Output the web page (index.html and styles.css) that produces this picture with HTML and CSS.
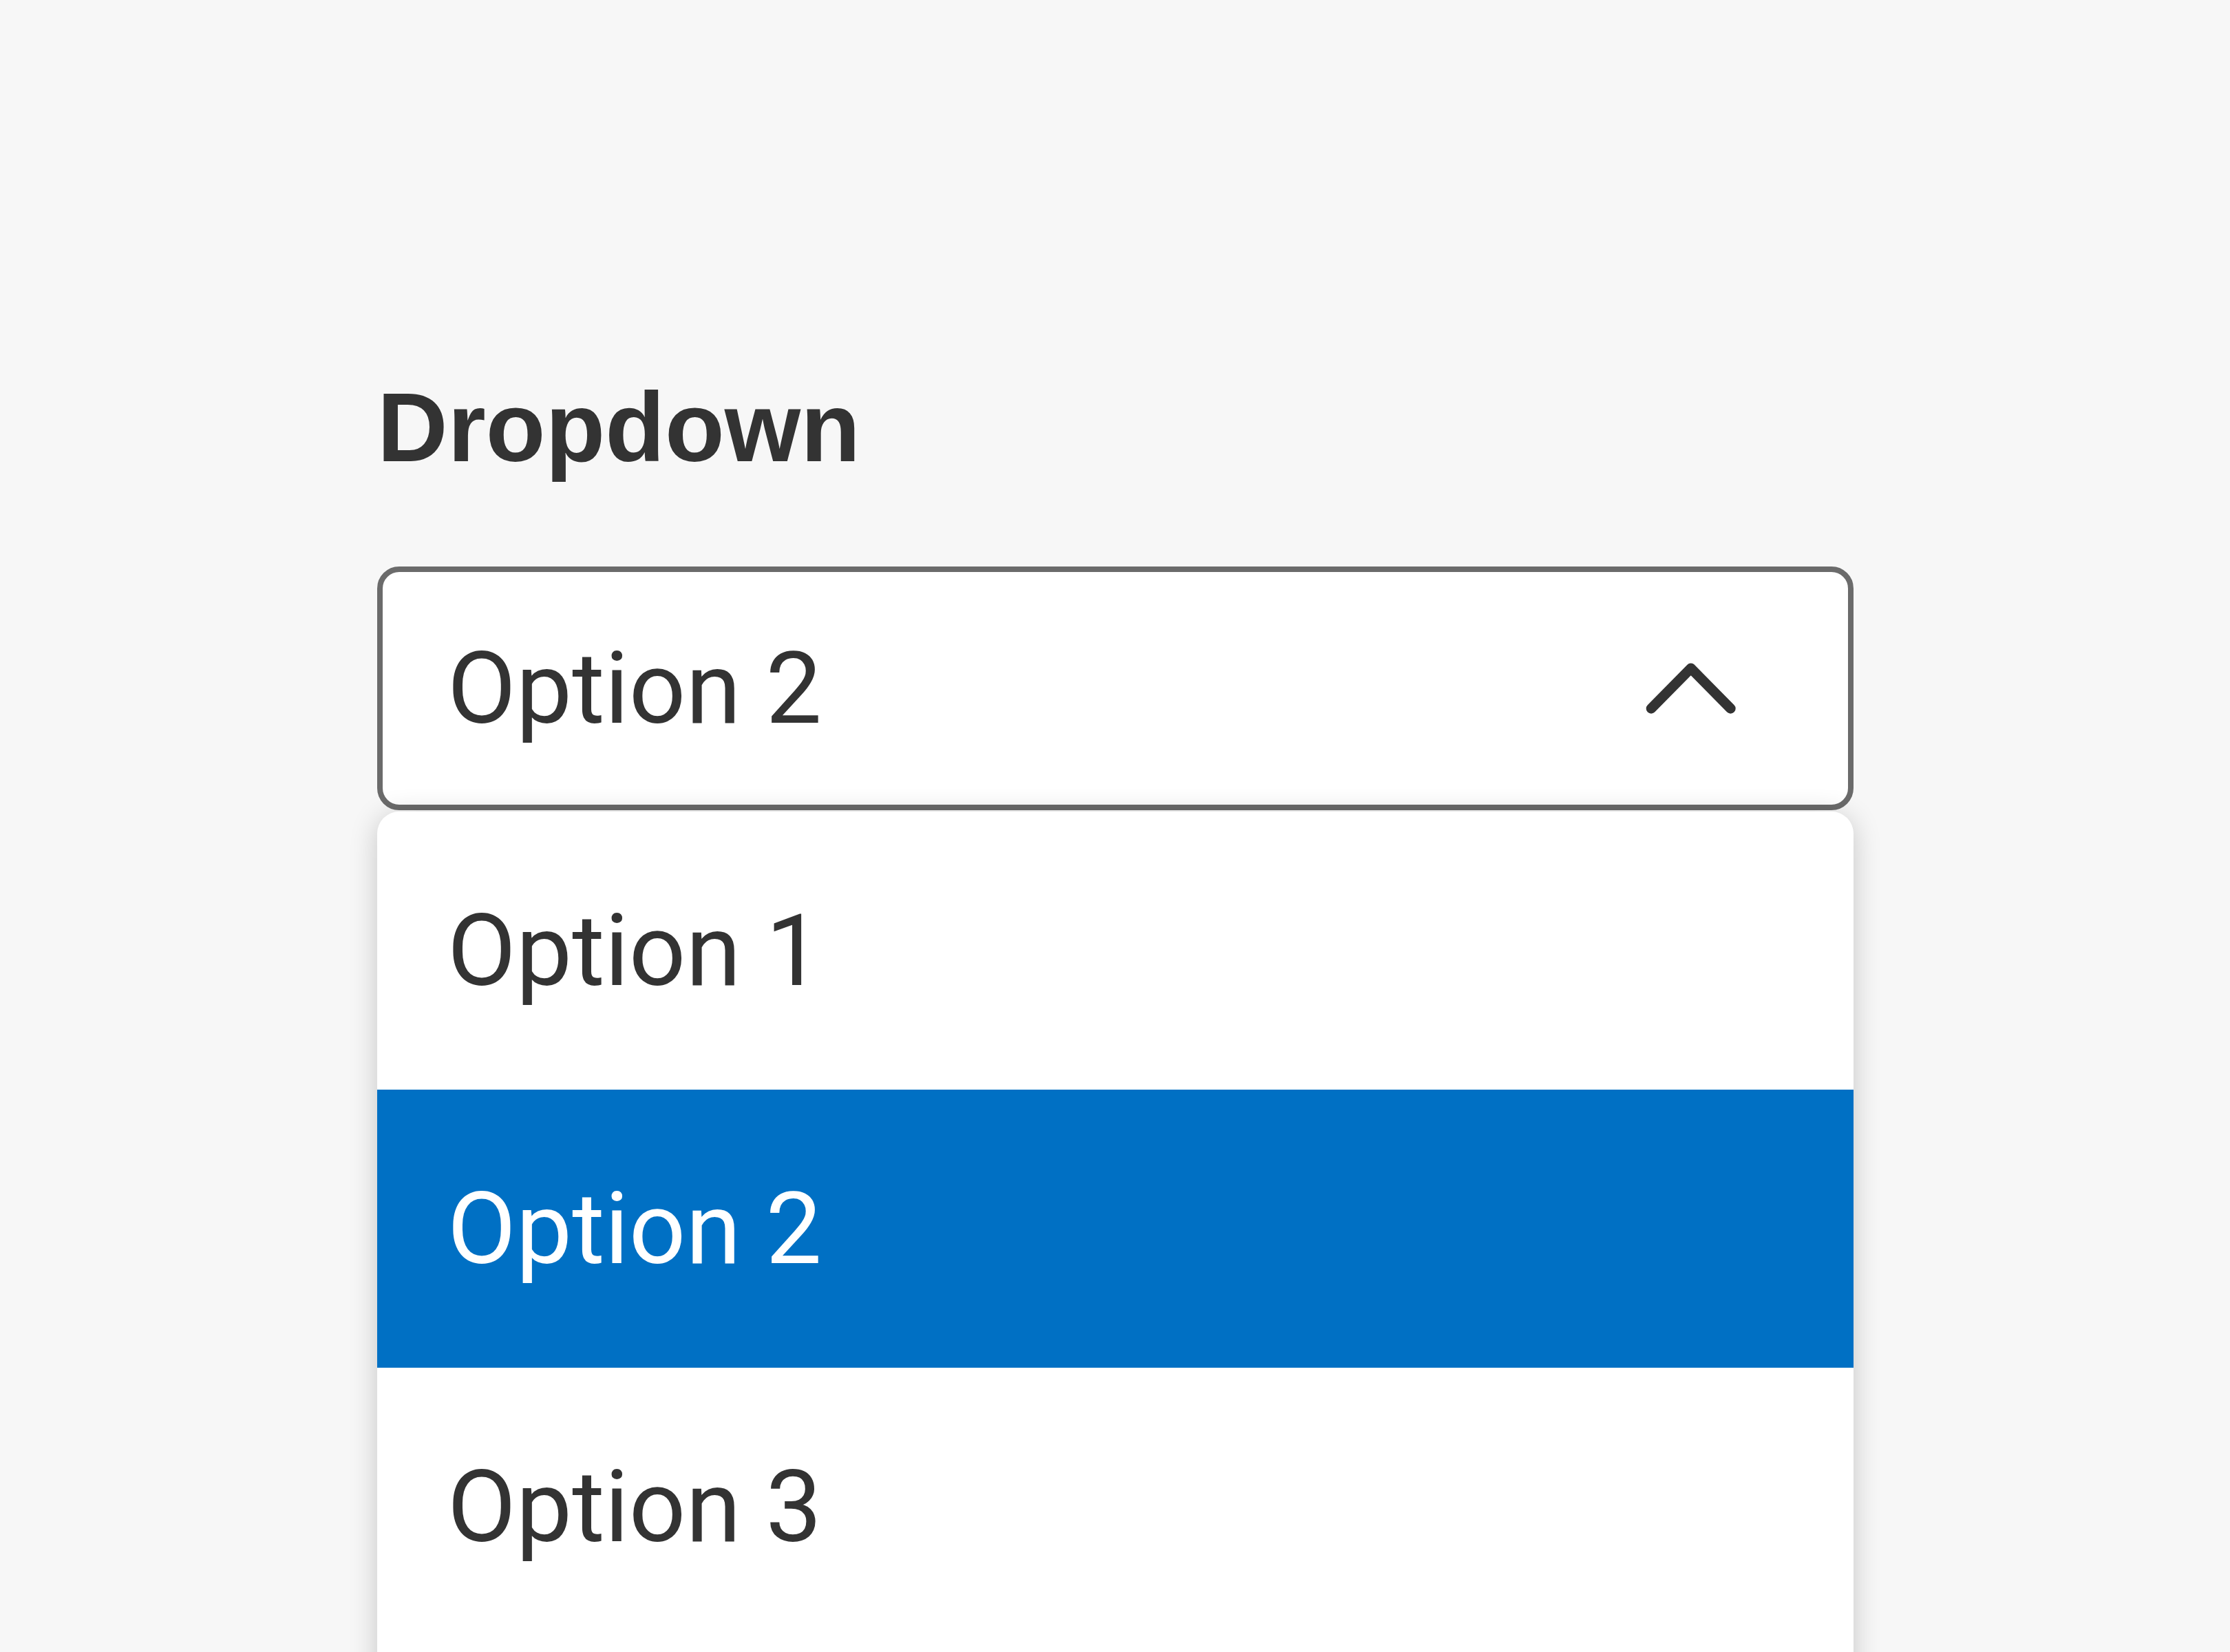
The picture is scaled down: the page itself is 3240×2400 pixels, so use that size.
FILE: index.html
```html
<!DOCTYPE html>
<html lang="en">
<head>
<meta charset="utf-8">
<title>Dropdown</title>
<link rel="stylesheet" href="styles.css">
</head>
<body>
<main class="page">
  <h1 class="title">Dropdown</h1>
  <div class="select">
    <span class="select-value">Option 2</span>
    <svg class="chevron" width="144" height="78" viewBox="0 0 144 78" aria-hidden="true">
      <polyline points="14,68.4 71.7,9.8 129.4,68.4" fill="none" stroke="#333333" stroke-width="14.6" stroke-linecap="round" stroke-linejoin="round"/>
    </svg>
  </div>
  <ul class="menu">
    <li class="menu-item">Option 1</li>
    <li class="menu-item is-selected">Option 2</li>
    <li class="menu-item">Option 3</li>
  </ul>
</main>
</body>
</html>
```

FILE: styles.css
```css
html, body {
  margin: 0;
  padding: 0;
  background: #f7f7f7;
  height: 100%;
  overflow: hidden;
}

body {
  font-family: "Roboto", "Liberation Sans", sans-serif;
  color: #333333;
}

.page {
  display: flex;
  flex-direction: column;
  width: 2145px;
  padding: 549px 0 0 548px;
}

.title {
  margin: 0;
  font-family: "Liberation Sans", Arial, sans-serif;
  font-size: 142px;
  line-height: 144px;
  font-weight: 700;
  color: #333333;
}

.select {
  margin-top: 130px;
  box-sizing: border-box;
  height: 354px;
  background: #ffffff;
  border: 8px solid #6b6b6b;
  border-radius: 32px;
  display: flex;
  align-items: center;
  justify-content: space-between;
  padding: 0 156px 0 94px;
}

.select-value {
  font-size: 145px;
  line-height: 1;
}

.chevron {
  display: block;
  flex: none;
}

.menu {
  list-style: none;
  margin: 2px 0 0 0;
  padding: 0 0 80px 0;
  background: #ffffff;
  border-radius: 32px;
  box-shadow: 0 6px 40px rgba(0, 0, 0, 0.2);
}

.menu-item {
  height: 404px;
  display: flex;
  align-items: center;
  padding-left: 102px;
  font-size: 145px;
  line-height: 1;
  color: #333333;
}

.menu-item.is-selected {
  background: #0070c4;
  color: #ffffff;
}
```
